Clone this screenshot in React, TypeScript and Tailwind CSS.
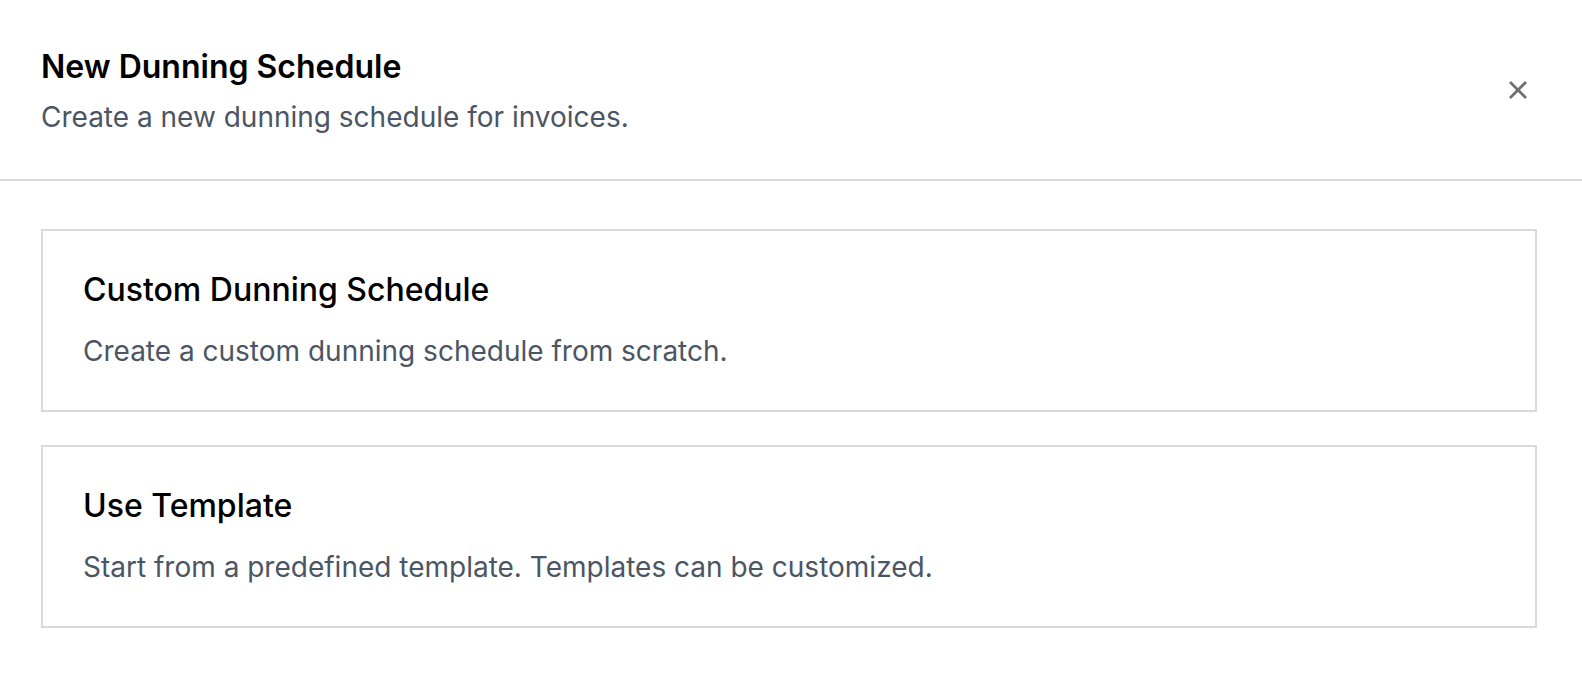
import React from "react";

function CloseIcon() {
  return (
    <svg width="18" height="18" viewBox="0 0 18 18" fill="none" stroke="#6e6e6e" strokeWidth="2.8" strokeLinecap="square">
      <path d="M2 2 L16 16 M16 2 L2 16" />
    </svg>
  );
}

function OptionCard({ title, desc }: { title: string; desc: string }) {
  return (
    <div className="border-2 border-[#dadada] bg-white px-[40px] pt-[35px] pb-[39px] cursor-pointer">
      <div className="text-[32px] leading-[48px] font-medium text-black">{title}</div>
      <div className="mt-[17px] text-[28px] leading-[40px] text-[#4b5563]">{desc}</div>
    </div>
  );
}

export default function App() {
  return (
    <div className="w-[1582px] h-[674px] bg-white overflow-hidden" style={{ fontFamily: "Inter, 'Noto Sans', sans-serif" }}>
      <div className="h-[181px] border-b-2 border-[#dadada] pl-[41px] pr-[55px] flex items-start justify-between">
        <div className="pt-[43px]">
          <div className="text-[32px] leading-[48px] font-semibold text-black">New Dunning Schedule</div>
          <div className="mt-[6px] text-[28px] leading-[40px] text-[#4b5563]">Create a new dunning schedule for invoices.</div>
        </div>
        <button className="mt-[81px] p-0 block">
          <CloseIcon />
        </button>
      </div>
      <div className="pl-[41px] pr-[45px] pt-[48px] flex flex-col gap-[33px]">
        <OptionCard title="Custom Dunning Schedule" desc="Create a custom dunning schedule from scratch." />
        <OptionCard title="Use Template" desc="Start from a predefined template. Templates can be customized." />
      </div>
    </div>
  );
}
